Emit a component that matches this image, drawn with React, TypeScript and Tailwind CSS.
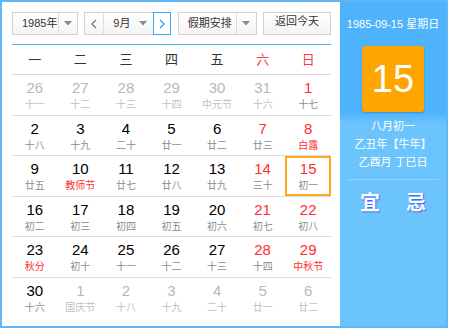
import React from 'react';

type Day = { d: number; l: string; other?: boolean; red?: boolean; fest?: boolean; today?: boolean };

const weeks: Day[][] = [
    [
        { d: 26, l: '十一', other: true }, { d: 27, l: '十二', other: true }, { d: 28, l: '十三', other: true },
        { d: 29, l: '十四', other: true }, { d: 30, l: '中元节', other: true }, { d: 31, l: '十六', other: true },
        { d: 1, l: '十七', red: true },
    ],
    [
        { d: 2, l: '十八' }, { d: 3, l: '十九' }, { d: 4, l: '二十' }, { d: 5, l: '廿一' },
        { d: 6, l: '廿二' }, { d: 7, l: '廿三', red: true }, { d: 8, l: '白露', red: true, fest: true },
    ],
    [
        { d: 9, l: '廿五' }, { d: 10, l: '教师节', fest: true }, { d: 11, l: '廿七' }, { d: 12, l: '廿八' },
        { d: 13, l: '廿九' }, { d: 14, l: '三十', red: true }, { d: 15, l: '初一', red: true, today: true },
    ],
    [
        { d: 16, l: '初二' }, { d: 17, l: '初三' }, { d: 18, l: '初四' }, { d: 19, l: '初五' },
        { d: 20, l: '初六' }, { d: 21, l: '初七', red: true }, { d: 22, l: '初八', red: true },
    ],
    [
        { d: 23, l: '秋分', fest: true }, { d: 24, l: '初十' }, { d: 25, l: '十一' }, { d: 26, l: '十二' },
        { d: 27, l: '十三' }, { d: 28, l: '十四', red: true }, { d: 29, l: '中秋节', red: true, fest: true },
    ],
    [
        { d: 30, l: '十六' }, { d: 1, l: '国庆节', other: true }, { d: 2, l: '十八', other: true },
        { d: 3, l: '十九', other: true }, { d: 4, l: '二十', other: true }, { d: 5, l: '廿一', other: true },
        { d: 6, l: '廿二', other: true },
    ],
];

const weekdays = ['一', '二', '三', '四', '五', '六', '日'];

function Caret() {
    return (
        <svg width="8" height="5" viewBox="0 0 8 5">
            <polygon points="0,0 8,0 4,4.5" fill="#8a8a8a" />
        </svg>
    );
}

function Chevron({ dir, color }: { dir: 'l' | 'r'; color: string }) {
    return (
        <svg width="6" height="10" viewBox="0 0 6 10">
            <polyline
                points={dir === 'l' ? '5,1 1,5 5,9' : '1,1 5,5 1,9'}
                fill="none"
                stroke={color}
                strokeWidth="1.3"
            />
        </svg>
    );
}

const box = 'h-[23px] border border-[#d2d2d2] bg-[linear-gradient(#ffffff,#f4f4f4)] flex items-stretch text-[11px] text-[#333]';

export default function App() {
    return (
        <div className="w-[448px] h-[328px] border-2 border-[#5fb8f5] bg-white flex font-['Liberation_Sans','Noto_Sans_CJK_SC',sans-serif]">
            <div className="w-[338px] pl-[10px] pr-[9px] pt-[10px]">
                {/* toolbar */}
                <div className="flex justify-between">
                    <div className={`${box} w-[66px]`}>
                        <div className="w-[46px] pl-[9px] flex items-center border-r border-[#dcdcdc]">1985年</div>
                        <div className="flex-1 flex items-center justify-center"><Caret /></div>
                    </div>
                    <div className={`${box} w-[87px]`}>
                        <div className="w-[19px] flex items-center justify-center border-r border-[#dcdcdc]">
                            <Chevron dir="l" color="#777" />
                        </div>
                        <div className="w-[49px] pl-[9px] pr-[6px] flex items-center justify-between">
                            <span>9月</span>
                            <Caret />
                        </div>
                        <div className="flex-1 -my-px -mr-px flex items-center justify-center border border-[#3ca9f4] bg-white">
                            <Chevron dir="r" color="#2b9ef0" />
                        </div>
                    </div>
                    <div className={`${box} w-[79px]`}>
                        <div className="w-[58px] pl-[9px] flex items-center border-r border-[#dcdcdc]">假期安排</div>
                        <div className="flex-1 flex items-center justify-center"><Caret /></div>
                    </div>
                    <div className={`${box} w-[68px] justify-center items-center`}>返回今天</div>
                </div>

                <div className="mt-[9px] h-px bg-[#55b6f4]" />

                {/* weekday header */}
                <div className="grid grid-cols-7 h-[30px] border-b border-[#d8d8d8] text-[13px]">
                    {weekdays.map((w, i) => (
                        <div key={w} className={`flex items-center justify-center ${i >= 5 ? 'text-[#ff3c3c]' : 'text-[#333]'}`}>
                            {w}
                        </div>
                    ))}
                </div>

                {/* days */}
                {weeks.map((week, wi) => (
                    <div key={wi} className={`grid grid-cols-7 h-[40.5px] ${wi < 5 ? 'border-b border-[#dcdcdc]' : ''}`}>
                        {week.map((day, di) => {
                            const numColor = day.other ? 'text-[#b8b8b8]' : day.red ? 'text-[#ff2d2d]' : 'text-black';
                            const lunColor = day.fest && !day.other ? 'text-[#ff2d2d]' : day.other ? 'text-[#c0c0c0]' : 'text-[#8c8c8c]';
                            return (
                                <div
                                    key={di}
                                    className={`flex flex-col items-center ${day.today ? 'border-2 border-[#ffa81a] pt-[3px]' : 'pt-[5px]'}`}
                                >
                                    <div className={`text-[15px] leading-[16px] ${numColor}`}>{day.d}</div>
                                    <div className={`mt-[2px] text-[10px] leading-[14px] ${lunColor}`}>{day.l}</div>
                                </div>
                            );
                        })}
                    </div>
                ))}
            </div>

            {/* right info panel */}
            <div className="flex-1 flex flex-col items-center pt-[15px] text-white bg-[linear-gradient(to_bottom,#4eb3fb_0px,#4eb3fb_110px,#6cc4fd_122px,#6cc4fd_100%)]">
                <div className="text-[11px] leading-[14px]">1985-09-15 星期日</div>
                <div className="mt-[15px] w-[62px] h-[66px] rounded-[3px] bg-[#ffa500] shadow-[0_1px_2px_rgba(40,60,140,0.35)] flex items-center justify-center">
                    <span className="text-[38px] leading-none">15</span>
                </div>
                <div className="mt-[5px] text-[11px] leading-[18px] text-center">
                    <div>八月初一</div>
                    <div>乙丑年【牛年】</div>
                    <div>乙酉月 丁巳日</div>
                </div>
                <div className="mt-[8px] w-[91px] h-px bg-[#93d4fe]" />
                <div className="mt-[11px] flex gap-[26px] text-[20px] leading-[24px] font-bold [text-shadow:1px_1px_1px_#4a62e8]">
                    <span>宜</span>
                    <span>忌</span>
                </div>
            </div>
        </div>
    );
}
